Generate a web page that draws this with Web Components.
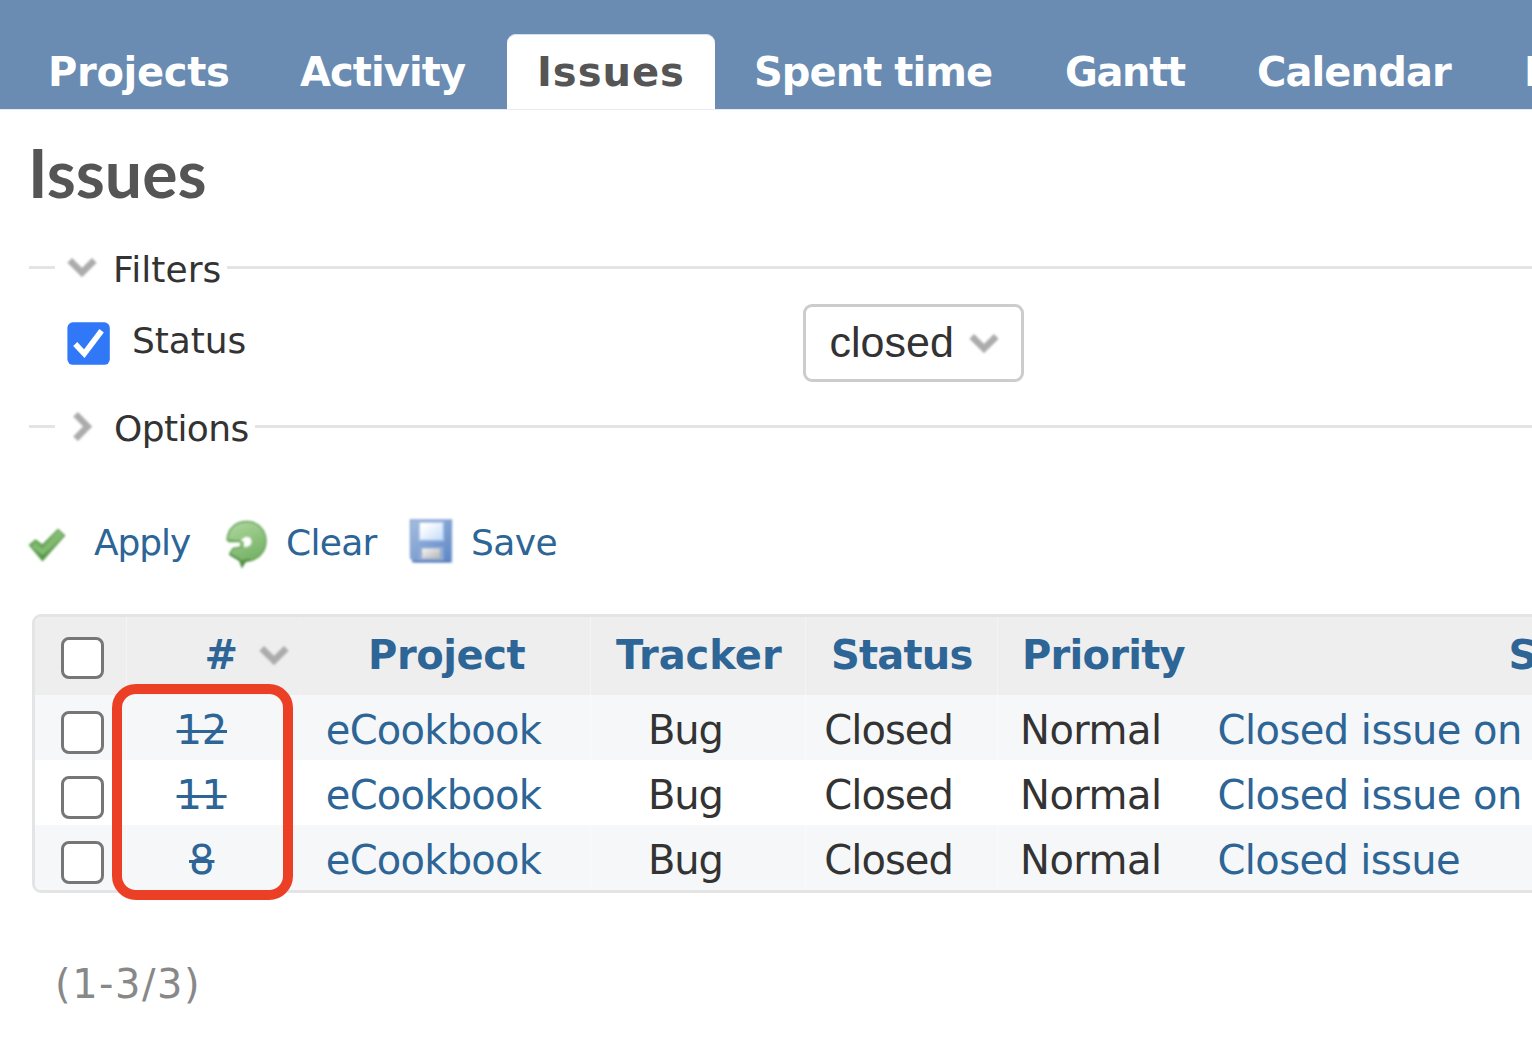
<!DOCTYPE html>
<html lang="en">
<head>
<meta charset="utf-8">
<title>Issues</title>
<style>
html,body{margin:0;height:1064px;overflow:hidden;background:#fff}
body{font-family:"DejaVu Sans",Verdana,sans-serif;font-size:40px;color:#333}
</style>
</head>
<body>
<issues-page></issues-page>
<script>
const pen = document.createElement('canvas').getContext('2d');

// Base class: renders the static template of each element in its shadow root.
class View extends HTMLElement {
  connectedCallback() {
    if (!this.shadowRoot) {
      this.attachShadow({mode: 'open'}).innerHTML = this.render();
    }
  }
  attr(n, d = '') { return this.getAttribute(n) ?? d; }
}

// A label whose visible glyphs span exactly `w` pixels, by tracking or, with `stretch`, by scaling.
customElements.define('fit-text', class extends View {
  render() {
    return `<style>:host{display:block;flex:none;white-space:pre;line-height:46px;height:46px;
      margin-left:var(--lsb,0)}:host([stretch]) span{display:inline-block;transform-origin:0 0}</style><span><slot></slot></span>`;
  }
  connectedCallback() {
    super.connectedCallback();
    const cs = getComputedStyle(this), text = this.textContent, w = +this.attr('w');
    pen.font = `${cs.fontWeight} ${cs.fontSize} ${cs.fontFamily}`;
    const m = pen.measureText(text), ink = m.actualBoundingBoxRight + m.actualBoundingBoxLeft;
    let lsb = -m.actualBoundingBoxLeft;
    if (this.hasAttribute('stretch')) {
      const k = w / ink;
      lsb *= k;
      this.shadowRoot.querySelector('span').style.transform = `scaleX(${k})`;
    } else if (text.length > 1 && w) {
      this.style.letterSpacing = (w - ink) / (text.length - 1) + 'px';
    }
    this.style.setProperty('--lsb', -lsb + 'px');
    this.style.width = (w || ink) + lsb + 'px';
  }
});

customElements.define('nav-tab', class extends View {
  render() {
    return `<style>:host{display:block;box-sizing:border-box;flex:none;height:75px;padding-top:15px;color:#fff;font-weight:700}
      :host([active]){background:#fff;color:#555;border-radius:9px 9px 0 0;box-shadow:inset 0 1px #d5dfea}</style><slot></slot>`;
  }
});

customElements.define('main-menu', class extends View {
  render() {
    const tabs = [['Projects',51,177,21],['Activity',51,166,41],['Issues',33,142,33,1],['Spent time',41,236,34],['Gantt',41,119,33],['Calendar',40,193,34],['News',41,108,0]];
    return `<style>:host{display:flex;align-items:flex-end;height:109px;overflow:hidden;background:#6a8cb3;border-bottom:1px solid #e8ebef}</style>` +
      tabs.map(([t,l,w,r,a]) => `<nav-tab ${a ? 'active' : ''} style="padding-left:${l}px;padding-right:${r}px"><fit-text w="${w}">${t}</fit-text></nav-tab>`).join('');
  }
});

customElements.define('chevron-icon', class extends View {
  render() {
    const r = this.attr('dir') === 'right';
    return `<style>:host{display:block;flex:none;width:30px;height:30px}svg{display:block;filter:blur(1px)}</style>
      <svg width="30" height="30" viewBox="0 0 30 30" fill="none" stroke="#acacac" stroke-width="6.6"><path d="${r ? 'M8.6 3.2 20.6 15.5 8.6 27.8' : 'M2.7 8.3 15 20.6 27.3 8.3'}"/></svg>`;
  }
});

customElements.define('check-box', class extends View {
  render() {
    return this.hasAttribute('checked')
      ? `<style>:host{display:block;flex:none;width:43px;height:43px}svg{display:block}</style>
        <svg width="43" height="43" viewBox="0 0 43 43"><rect x=".4" y=".3" width="42.4" height="42.5" rx="5.5" fill="#3078f7"/><path d="M8.2 22 17.300 31.6 34.6 8.800" fill="none" stroke="#fff" stroke-width="5.6"/></svg>`
      : `<style>:host{display:block;box-sizing:border-box;flex:none;width:42.5px;height:42.5px;border:3px solid #767676;border-radius:8px;background:#fff}</style>`;
  }
});

customElements.define('field-legend', class extends View {
  render() {
    return `<style>:host{display:flex;height:42px;font-size:36px}i{height:3px;background:#e4e4e4;margin-top:16.5px}
      .a{width:26px;margin-left:29px}.b{flex:1;margin-left:7px}chevron-icon{margin:3px 0 0 12px}
      .t{margin:-2px 0 0 19px}</style>
      <i class="a"></i><chevron-icon dir="${this.attr('dir')}"></chevron-icon><div class="t"><slot></slot></div><i class="b"></i>`;
  }
});

customElements.define('select-box', class extends View {
  render() {
    return `<style>:host{display:flex;box-sizing:border-box;width:221px;height:78px;border:3px solid #ccc;border-radius:9px;
      font-family:"Liberation Sans",Arial,sans-serif;font-size:43px;padding:12px 0 0 24.5px}
      chevron-icon{margin:9px 0 0 17px}</style><slot></slot><chevron-icon></chevron-icon>`;
  }
});

customElements.define('tool-icon', class extends View {
  render() {
    const art = {
      apply: `<svg width="38" height="36" viewBox="0 0 38 36"><defs><linearGradient id="g" x2="0" y2="1"><stop stop-color="#93c580"/><stop offset="1" stop-color="#4c8f3e"/></linearGradient></defs>
        <path d="M1.500 17 7.5 12 14.5 17 30 1.500 36.5 7.500 14.5 32.5Z" fill="url(#g)" stroke="#67a458" stroke-width="1.5" stroke-linejoin="round"/><path d="M5.5 17 14.5 24 32.5 6.500" fill="none" stroke="#82bb70" stroke-width="5"/></svg>`,
      clear: `<svg width="42" height="48" viewBox="0 0 42 48"><defs><linearGradient id="g" x2=".4" y2="1"><stop stop-color="#b0d9a0"/><stop offset="1" stop-color="#74b064"/></linearGradient></defs>
        <path d="M1 20C2 8 10 1.500 21 1.500 32 1.500 40 10 40 21 40 32 32 41 20 41L16 46.500 15 41 3.500 34 7 28.500 15 27 15 21.500Z" fill="url(#g)" stroke="#66a257" stroke-width="1.400" stroke-linejoin="round"/><path d="M14 20.500 18 17C22 15 26 17.500 26 21.500 26 25 23 27.500 19 27.500L17 26 17.500 22Z" fill="#fff" stroke="#8fc480" stroke-width="1"/><path d="M2 21.500H14" stroke="#6aa65c" stroke-width="1.500"/><path d="M4 34.500 14 40.500 16 46 17.500 41 24 40" fill="none" stroke="#4e8c42" stroke-width="2"/></svg>`,
      save: `<svg width="44" height="46" viewBox="0 0 44 46"><defs><linearGradient id="g" x2="1" y2="1"><stop stop-color="#a6bddf"/><stop offset="1" stop-color="#5b86c6"/></linearGradient><linearGradient id="h" x2="1" y2="1"><stop offset=".2" stop-color="#fff"/><stop offset="1" stop-color="#c2dafa"/></linearGradient><linearGradient id="k" x2="1" y2="1"><stop stop-color="#f5f5f5"/><stop offset="1" stop-color="#b4b4b4"/></linearGradient></defs>
        <path d="M1.500 2H42.500V44H5.500L1.500 40Z" fill="url(#g)" stroke="#8ba7d3" stroke-width="1.500"/><rect x="10" y="4" width="24.500" height="18.500" fill="url(#h)" stroke="#a3bde4" stroke-width="1.500"/><rect x="9.500" y="29" width="25" height="13.500" fill="#91acd3"/><rect x="13" y="30.500" width="18" height="10" fill="url(#k)"/><path d="M3 43.500H41" stroke="#5277b4" stroke-width="1.500"/></svg>`
    };
    return `<style>:host{display:block;flex:none}svg{display:block;filter:blur(.9px)}</style>` + art[this.attr('name')];
  }
});

customElements.define('tool-bar', class extends View {
  render() {
    return `<style>:host{display:flex;height:54px;font-size:36px;color:#2d6596}fit-text{margin-top:4px}</style>
      <tool-icon name="apply" style="margin:12px 28.500px 0 27.500px"></tool-icon><fit-text w="97">Apply</fit-text>
      <tool-icon name="clear" style="margin:4px 20.500px 0 34.500px"></tool-icon><fit-text w="89.500">Clear</fit-text>
      <tool-icon name="save" style="margin:2px 20.500px 0 31px"></tool-icon><fit-text w="83.500">Save</fit-text>`;
  }
});

// One table line; each cell is [text, left padding, glyph width, extra class].
class Line extends View {
  line(cells, head) {
    return `<style>:host{display:grid;grid-template-columns:92px 173px 291px 215px 192px 190px 1fr;height:${head ? 78 : 65}px;
        background:${head ? '#eee' : 'var(--row,#fff)'};${head ? 'font-weight:700;color:#2d6596' : ''}}
      .c{display:flex;min-width:0;padding-top:${head ? 15 : 12}px;box-sizing:border-box;border-right:1px solid rgba(255,255,255,.35)}
      .k{padding:${head ? 19.5 : 16}px 0 0 26px}.c:nth-of-type(2){border-color:rgba(255,255,255,.12)}.c:nth-of-type(n+6){border:0}
      .l{color:#2d6596}.s{text-decoration:line-through;text-decoration-thickness:3px}
      chevron-icon{margin:8px 0 0 23px}</style>
      <div class="c k"><check-box></check-box></div>` +
      cells.map(([t,l,w,k]) => `<div class="c" style="padding-left:${l}px"><fit-text w="${w}" class="${k || ''}">${t}</fit-text>${t === '#' ? '<chevron-icon></chevron-icon>' : ''}</div>`).join('');
  }
}
customElements.define('issue-head', class extends Line {
  render() {
    return this.line([['#',79.5,29.5],['Project',71,154.5],['Tracker',25,166],['Status',27,138.5],['Priority',27,160.5],['Subject',322.5,160]], true);
  }
});
customElements.define('issue-row', class extends Line {
  render() {
    const n = this.attr('num'), s = this.attr('subject');
    return this.line([[n, n.length > 1 ? 53.6 : 64, n === '12' ? 43.2 : n === '11' ? 43 : 21, 'l s'],['eCookbook',27.8,215,'l'],['Bug',60,69.5],['Closed',20.3,124.2],['Normal',25,136],[s,31.5,this.attr('sw'),'l']], false);
  }
});

customElements.define('issue-table', class extends View {
  render() {
    return `<style>:host{display:block;position:relative;width:1600px;margin-left:32px;border:3px solid #e4e4e4;border-radius:9px;box-sizing:border-box}
      .in{border-radius:6px;overflow:hidden}
      .mark{position:absolute;left:77px;top:67px;width:181px;height:216px;box-sizing:border-box;border:10px solid #ec4026;border-radius:24px}
      .o{--row:#f6f7f9}</style>
      <div class="in"><issue-head></issue-head>
      <issue-row class="o" num="12" subject="Closed issue on" sw="299.500"></issue-row>
      <issue-row num="11" subject="Closed issue on" sw="299.500"></issue-row>
      <issue-row class="o" num="8" subject="Closed issue" sw="239.500"></issue-row></div><div class="mark"></div>`;
  }
});

customElements.define('issues-page', class extends View {
  render() {
    return `<style>:host{display:block;width:1532px;height:1064px;overflow:hidden;background:#fff}
      h1{margin:18px 0 31px 33px;font:700 66px Lato,"Open Sans",sans-serif;color:#555;height:90px;display:flex}
      h1 fit-text{line-height:90px;height:90px}
      .st{display:flex;height:78px;margin:13px 0 26px 67px;font-size:36px}
      .st check-box{margin:18px 24px 0 0}.st>fit-text{margin-top:14px}
      select-box{margin-left:558.500px}
      tool-bar{margin:66px 0 44px}
      .pg{color:#888;margin:68px 0 0 58px;display:flex}</style>
      <main-menu></main-menu>
      <h1><fit-text w="171.500" stretch>Issues</fit-text></h1>
      <field-legend><fit-text w="103.500">Filters</fit-text></field-legend>
      <div class="st"><check-box checked></check-box><fit-text w="110.500">Status</fit-text><select-box><fit-text w="121.500">closed</fit-text></select-box></div>
      <field-legend dir="right"><fit-text w="131.500">Options</fit-text></field-legend>
      <tool-bar></tool-bar>
      <issue-table></issue-table>
      <div class="pg"><fit-text w="139">(1-3/3)</fit-text></div>`;
  }
});
</script>
</body>
</html>
